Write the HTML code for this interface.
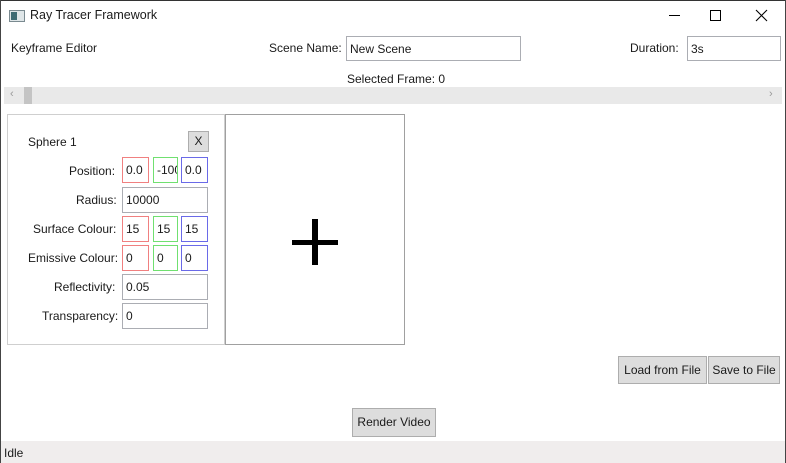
<!DOCTYPE html>
<html><head><style>
*{box-sizing:border-box;margin:0;padding:0}
body{width:786px;height:463px;overflow:hidden;background:#fff;font-family:"Liberation Sans",sans-serif;font-size:12px;color:#1a1a1a;position:relative}
.a{position:absolute;white-space:nowrap}
.tb{position:absolute;border:1px solid #abadb3;background:#fff;padding:2px 0 0 3px;line-height:20px;overflow:hidden}
.r{border:1px solid #f08080 !important}
.g{border:1px solid #70e070 !important}
.b{border:1px solid #6a6ae8 !important}
.btn{position:absolute;background:#dddddd;border:1px solid #adadad;text-align:center}
</style></head><body>
<div class="a" style="left:0;top:0;width:786px;height:1px;background:#333"></div>
<div class="a" style="left:0;top:0;width:1px;height:463px;background:#444"></div>
<div class="a" style="left:785px;top:0;width:1px;height:463px;background:#444"></div>
<div class="a" style="left:9px;top:10px;width:16px;height:12px;border:1px solid #7a8a90;background:#dfe6e8"></div>
<div class="a" style="left:11px;top:12px;width:6px;height:8px;background:#3e6b73"></div>
<div class="a" style="left:30px;top:8px;font-size:12.5px">Ray Tracer Framework</div>
<div class="a" style="left:669px;top:15px;width:11px;height:1px;background:#000"></div>
<div class="a" style="left:710px;top:10px;width:11px;height:11px;border:1px solid #000"></div>
<svg class="a" style="left:755px;top:9px" width="13" height="13"><path d="M1 1L12 12M12 1L1 12" stroke="#000" stroke-width="1.1"/></svg>

<div class="a" style="left:11px;top:41px">Keyframe Editor</div>
<div class="a" style="left:269px;top:41px">Scene Name:</div>
<div class="tb" style="left:346px;top:36px;width:175px;height:25px">New Scene</div>
<div class="a" style="left:630px;top:41px">Duration:</div>
<div class="tb" style="left:687px;top:36px;width:94px;height:25px">3s</div>
<div class="a" style="left:347px;top:72px">Selected Frame: 0</div>
<div class="a" style="left:4px;top:87px;width:778px;height:17px;background:#e9e9e9"></div>
<div class="a" style="left:24px;top:87px;width:8px;height:17px;background:#c4c4c4"></div>
<div class="a" style="left:10px;top:88px;color:#999;font-size:11px">‹</div>
<div class="a" style="left:769px;top:88px;color:#999;font-size:11px">›</div>

<div class="a" style="left:7px;top:114px;width:218px;height:231px;border:1px solid #cfcfcf"></div>
<div class="a" style="left:225px;top:114px;width:180px;height:231px;border:1px solid #a0a0a0"></div>
<div class="a" style="left:292px;top:240px;width:46px;height:5px;background:#000"></div>
<div class="a" style="left:312px;top:219px;width:6px;height:46px;background:#000"></div>

<div class="a" style="left:28px;top:135px">Sphere 1</div>
<div class="btn" style="left:188px;top:131px;width:21px;height:21px;line-height:19px">X</div>
<div class="a" style="left:69px;top:164px">Position:</div>
<div class="tb r" style="left:122px;top:157px;width:27px;height:26px">0.0</div>
<div class="tb g" style="left:153px;top:157px;width:25px;height:26px">-100</div>
<div class="tb b" style="left:181px;top:157px;width:27px;height:26px">0.0</div>
<div class="a" style="left:76px;top:193px">Radius:</div>
<div class="tb" style="left:122px;top:187px;width:86px;height:26px">10000</div>
<div class="a" style="left:33px;top:222px">Surface Colour:</div>
<div class="tb r" style="left:122px;top:216px;width:27px;height:26px">15</div>
<div class="tb g" style="left:153px;top:216px;width:25px;height:26px">15</div>
<div class="tb b" style="left:181px;top:216px;width:27px;height:26px">15</div>
<div class="a" style="left:28px;top:251px">Emissive Colour:</div>
<div class="tb r" style="left:122px;top:245px;width:27px;height:26px">0</div>
<div class="tb g" style="left:153px;top:245px;width:25px;height:26px">0</div>
<div class="tb b" style="left:181px;top:245px;width:27px;height:26px">0</div>
<div class="a" style="left:54px;top:280px">Reflectivity:</div>
<div class="tb" style="left:122px;top:274px;width:86px;height:26px">0.05</div>
<div class="a" style="left:42px;top:309px">Transparency:</div>
<div class="tb" style="left:122px;top:303px;width:86px;height:26px">0</div>

<div class="btn" style="left:618px;top:356px;width:89px;height:28px;line-height:26px">Load from File</div>
<div class="btn" style="left:708px;top:356px;width:72px;height:28px;line-height:26px">Save to File</div>
<div class="btn" style="left:352px;top:408px;width:84px;height:29px;line-height:27px">Render Video</div>

<div class="a" style="left:1px;top:441px;width:784px;height:22px;background:#f0eded"></div>
<div class="a" style="left:4px;top:446px">Idle</div>
</body></html>
